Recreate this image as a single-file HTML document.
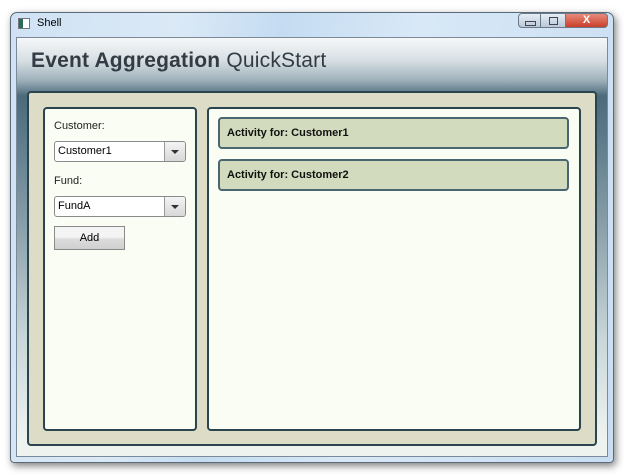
<!DOCTYPE html>
<html><head><style>
body{margin:0;width:624px;height:475px;background:#fff;position:relative;overflow:hidden;font-family:"Liberation Sans",sans-serif}
.win{position:absolute;left:10px;top:12px;width:604px;height:451px;border-radius:7px 7px 4px 4px;background:linear-gradient(100deg,#cfe2f4 0%,#dbe9f6 25%,#c4dcf2 40%,#d8e8f6 60%,#c9def3 100%);border:1px solid #5a6a78;box-sizing:border-box;box-shadow:2px 3px 8px rgba(0,0,0,.5)}
.title{position:absolute;left:37px;top:17px;font-size:11px;color:#000}
.ico{position:absolute;left:18px;top:18px;width:10px;height:9px;border:1px solid #777;background:linear-gradient(90deg,#2a6a5a 40%,#fff 40%)}
.btn{position:absolute;top:13px;height:15px;border:1px solid #6a7888;box-sizing:border-box}
.client{position:absolute;left:16px;top:37px;width:592px;height:420px;border:1px solid #7a8a98;box-sizing:border-box;background:linear-gradient(180deg,#f5f7f8 0px,#d8e0e4 22px,#9fb2bc 42px,#4c6a7a 58px,#577686 90px,#8aa0aa 190px,#c8d6d8 300px,#eef3f0 400px)}
h1{position:absolute;left:31px;top:49px;margin:0;font-size:21px;font-weight:normal;color:#333c44;font-family:"Liberation Sans",sans-serif;letter-spacing:0.2px}
.main{position:absolute;left:27px;top:91px;width:570px;height:355px;background:#dddcc6;border:2px solid #2a4450;border-radius:4px;box-sizing:border-box}
.panel{position:absolute;top:107px;height:324px;background:#fafdf3;border:2px solid #2a4450;border-radius:4px;box-sizing:border-box}
.lbl{position:absolute;left:54px;font-size:11px;color:#222}
.combo{position:absolute;left:54px;width:132px;height:21px;border:1px solid #8a8a8a;border-radius:3px;box-sizing:border-box;background:#fff;font-size:11px;line-height:19px;padding-left:3px}
.combo .dd{position:absolute;right:0;top:0;width:20px;height:19px;background:linear-gradient(#f4f4f4,#d8d8d8);border-left:1px solid #999;border-radius:0 2px 2px 0}
.combo .dd:after{content:"";position:absolute;left:6px;top:8px;border-left:4px solid transparent;border-right:4px solid transparent;border-top:4px solid #333}
.add{position:absolute;left:54px;top:226px;width:71px;height:24px;border:1px solid #8a8a8a;box-sizing:border-box;background:linear-gradient(#f4f4f4 45%,#dcdcdc 55%,#d0d0d0);font-size:11px;text-align:center;line-height:22px}
.act{position:absolute;left:218px;width:351px;height:32px;background:#d2dbbd;border:2px solid #4a6670;border-radius:4px;box-sizing:border-box;font-size:11px;font-weight:bold;padding-left:7px;line-height:28px;color:#111}
</style></head><body>
<div class="win"></div>
<div class="ico"></div>
<div class="title">Shell</div>
<div class="btn" style="left:518px;width:23px;border-radius:4px 0 0 4px;background:linear-gradient(#e6eef6,#b8c8d8)"><div style="position:absolute;left:6px;top:7px;width:9px;height:3px;border:1px solid #445"></div></div>
<div class="btn" style="left:540px;width:26px;background:linear-gradient(#e6eef6,#b8c8d8)"><div style="position:absolute;left:8px;top:3px;width:7px;height:6px;border:1px solid #445"></div></div>
<div class="btn" style="left:565px;width:43px;border-radius:0 4px 4px 0;background:linear-gradient(#e88a7a,#c8402c);color:#fff;font-weight:bold;font-size:11px;text-align:center;line-height:13px">X</div>
<div class="client"></div>
<h1><b>Event Aggregation</b> QuickStart</h1>
<div class="main"></div>
<div class="panel" style="left:43px;width:154px"></div>
<div class="panel" style="left:207px;width:374px"></div>
<div class="lbl" style="top:120px">Customer:</div>
<div class="combo" style="top:141px">Customer1<div class="dd"></div></div>
<div class="lbl" style="top:175px">Fund:</div>
<div class="combo" style="top:196px">FundA<div class="dd"></div></div>
<div class="add">Add</div>
<div class="act" style="top:117px">Activity for: Customer1</div>
<div class="act" style="top:159px">Activity for: Customer2</div>
</body></html>
